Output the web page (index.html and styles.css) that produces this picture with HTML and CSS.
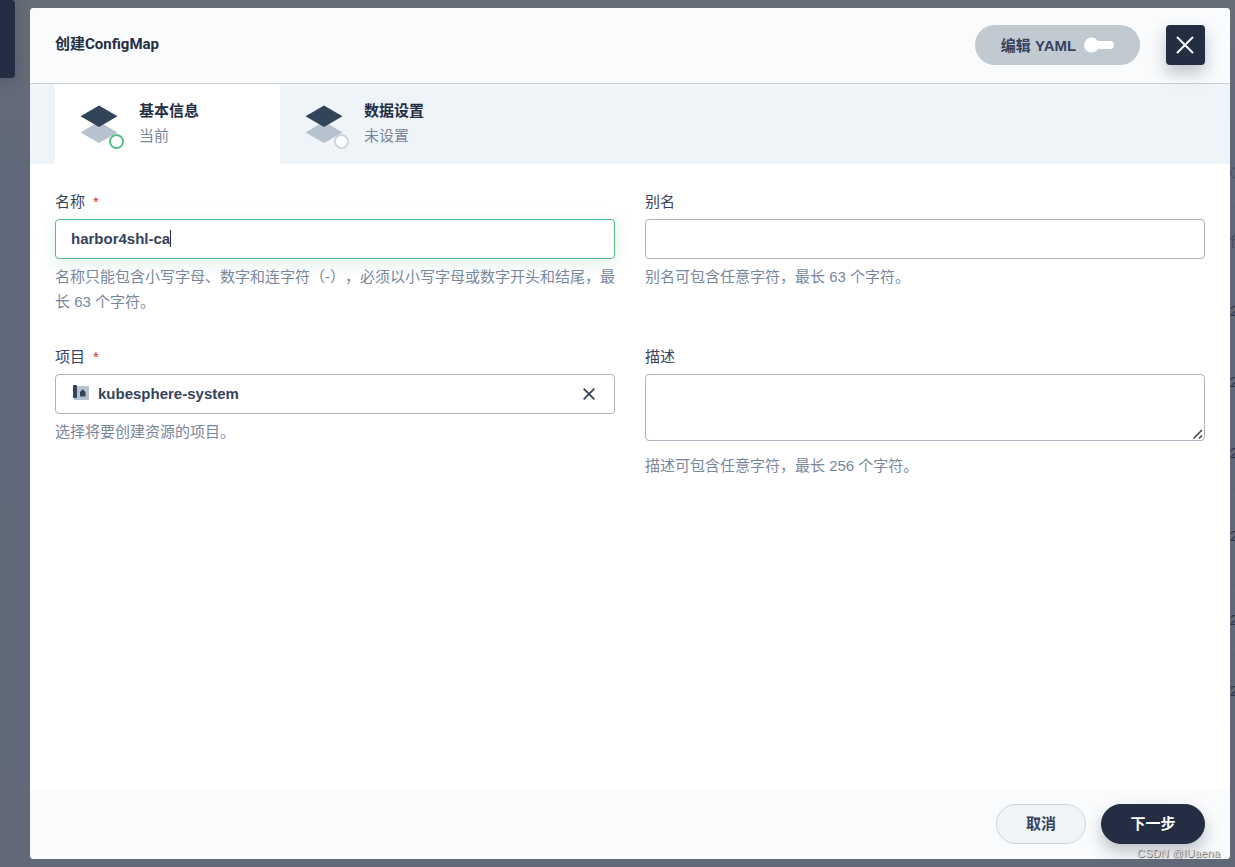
FILE: index.html
```
<!DOCTYPE html>
<html lang="zh-CN">

<head>
    <meta charset="UTF-8">
    <meta name="viewport" content="width=device-width, initial-scale=1.0">
    <title>创建ConfigMap</title>
    <link rel="stylesheet" href="styles.css">
</head>

<body>

    <!-- 遮罩下的列表页 -->
    <div class="page">
        <div class="page-nav"></div>
        <div class="page-list">
            <div class="row search"><i></i></div>
            <div class="row head">创</div>
            <div class="row">2</div>
            <div class="row">2</div>
            <div class="row">2</div>
            <div class="row tall">2</div>
            <div class="row">2</div>
            <div class="row">2</div>
        </div>
    </div>

    <div class="modal">
        <div class="modal-header">
            <h3>创建ConfigMap</h3>
            <button class="btn-yaml" type="button">
                <span>编辑 YAML</span>
                <svg width="30" height="16" viewBox="0 0 30 16"><rect x="6" y="4" width="24" height="8" rx="4" fill="#fff"/><circle cx="7.5" cy="8" r="7.5" fill="#fff"/></svg>
            </button>
            <button class="btn-close" type="button">
                <svg width="20" height="20" viewBox="0 0 20 20"><path d="M2 2L18 18M18 2L2 18" stroke="#fff" stroke-width="2"/></svg>
            </button>
        </div>

        <div class="tabs">
            <div class="tab active">
                <div class="tab-icon">
                    <svg width="40" height="40" viewBox="0 0 40 40"><path d="M20 17.5L38.5 28.5L20 39L1.5 28.5Z" fill="#b6c2cd"/><path d="M20 1.5L38.5 12.2L20 23L1.5 12.2Z" fill="#324558"/></svg>
                    <span class="dot"></span>
                </div>
                <div>
                    <div class="tab-title">基本信息</div>
                    <div class="tab-desc">当前</div>
                </div>
            </div>
            <div class="tab">
                <div class="tab-icon">
                    <svg width="40" height="40" viewBox="0 0 40 40"><path d="M20 17.5L38.5 28.5L20 39L1.5 28.5Z" fill="#b6c2cd"/><path d="M20 1.5L38.5 12.2L20 23L1.5 12.2Z" fill="#324558"/></svg>
                    <span class="dot"></span>
                </div>
                <div>
                    <div class="tab-title">数据设置</div>
                    <div class="tab-desc">未设置</div>
                </div>
            </div>
        </div>

        <div class="form">
            <div class="form-item">
                <label>名称<span class="required">*</span></label>
                <div class="input focus">harbor4shl-ca<span class="caret"></span></div>
                <p>名称只能包含小写字母、数字和连字符（-），必须以小写字母或数字开头和结尾，最长 63 个字符。</p>
            </div>
            <div class="form-item">
                <label>别名</label>
                <div class="input"></div>
                <p>别名可包含任意字符，最长 63 个字符。</p>
            </div>
            <div class="form-item">
                <label>项目<span class="required">*</span></label>
                <div class="input select">
                    <svg width="16" height="16" viewBox="0 0 16 16"><rect x="1" y="2" width="15" height="14" fill="#b6c2cd"/><rect x="0" y="1" width="4" height="13" rx="1" fill="#324558"/><path d="M7 12.5V8L9.7 5.2L12.5 8V12.5Z" fill="#324558"/></svg>
                    <span>kubesphere-system</span>
                    <svg class="clear" width="12" height="12" viewBox="0 0 12 12"><path d="M.7 .7L11.3 11.3M11.3 .7L.7 11.3" stroke="#324558" stroke-width="1.8"/></svg>
                </div>
                <p>选择将要创建资源的项目。</p>
            </div>
            <div class="form-item">
                <label>描述</label>
                <div class="input textarea">
                    <svg width="10" height="10" viewBox="0 0 10 10"><path d="M.5 9.5L9 1M6 9.5L9 6.5" stroke="#444" stroke-width="1.5"/></svg>
                </div>
                <p>描述可包含任意字符，最长 256 个字符。</p>
            </div>
        </div>

        <div class="modal-footer">
            <button class="btn" type="button">取消</button>
            <button class="btn btn-primary" type="button">下一步</button>
        </div>
    </div>

    <div class="watermark">CSDN @IUaena</div>

</body>

</html>
```
FILE: styles.css
```
* {
    box-sizing: border-box;
}

body {
    margin: 0;
    height: 867px;
    overflow: hidden;
    position: relative;
    color: #36435c;
    font: 15px/25px "Liberation Sans", "Noto Sans CJK SC", sans-serif;
    text-spacing-trim: space-all;
    background: #626a79;
}

h3, p {
    margin: 0;
}

svg {
    display: block;
    flex: none;
}

button {
    padding: 0;
    border: 0;
    color: inherit;
    font: inherit;
    font-weight: bold;
}

/* 背景页面 */
.page {
    height: 867px;
    display: flex;
    justify-content: space-between;
    background: linear-gradient(#676c78, #606979 170px, #616979);
}

.page-nav {
    width: 15px;
    height: 78px;
    border-radius: 0 4px 4px 0;
    background: #242e42;
    box-shadow: 0 4px 16px rgba(36, 46, 66, .3);
}

.page-list {
    width: 5px;
    padding-top: 140px;
    overflow: hidden;
    color: #2b3347;
}

.row {
    height: 71px;
    padding-bottom: 2px;
    display: flex;
    align-items: center;
    border-bottom: 1px solid #5c6474;
}

.row.search, .row.head {
    height: 68px;
    color: #3f4a63;
}

.row.search i {
    width: 12px;
    height: 12px;
    flex: none;
    border: 2px solid #4f596d;
    border-radius: 50%;
}

.row.tall {
    height: 96px;
}

/* 弹窗 */
.modal {
    position: absolute;
    top: 8px;
    left: 30px;
    width: 1200px;
    height: 851px;
    display: flex;
    flex-direction: column;
    overflow: hidden;
    border-radius: 4px;
    background: #fff;
}

.modal-header {
    height: 76px;
    padding: 0 25px;
    display: flex;
    align-items: center;
    flex: none;
    border-bottom: 1px solid #c7cfd7;
    background: #f9fbfd;
}

.modal-header h3 {
    margin-right: auto;
    padding-bottom: 4px;
    color: #242e42;
    font: bold 15px/20px Roboto, "Noto Sans CJK SC", sans-serif;
}

.btn-yaml {
    width: 165px;
    height: 40px;
    margin: 0 26px 2px 0;
    display: flex;
    align-items: center;
    justify-content: center;
    gap: 8px;
    border-radius: 20px;
    background: #c1c9d1;
}

.btn-yaml span {
    padding-top: 1px;
}

.btn-close {
    width: 39px;
    height: 40px;
    margin-bottom: 2px;
    padding-right: 1px;
    display: flex;
    align-items: center;
    justify-content: center;
    position: relative;
    border-radius: 4px;
    background: #242e42;
    box-shadow: 0 8px 16px rgba(36, 46, 66, .28);
}

.tabs {
    height: 80px;
    padding-left: 25px;
    display: flex;
    flex: none;
    background: #eff4f9;
}

.tab {
    width: 225px;
    padding: 14px 24px;
    display: flex;
    gap: 20px;
}

.tab.active {
    background: #fff;
}

.tab-icon {
    height: 40px;
    margin-top: 6px;
    position: relative;
}

.dot {
    position: absolute;
    right: -5px;
    bottom: -5px;
    width: 15px;
    height: 15px;
    border: 2px solid #ccd3db;
    border-radius: 50%;
    background: #fff;
}

.active .dot {
    border-color: #55bc8a;
}

.tab-title {
    color: #242e42;
    font-weight: bold;
}

.tab-desc {
    color: #79879c;
}

/* 表单 */
.form {
    flex: 1;
    padding: 25px;
    display: grid;
    grid-template-columns: 560px 560px;
    gap: 30px;
    align-content: start;
}

.form-item label {
    display: block;
}

.form-item p {
    margin-top: 5px;
    color: #79879c;
}

.required {
    margin-left: 8px;
    color: #d9302b;
}

.input {
    height: 40px;
    margin-top: 5px;
    padding: 0 15px 2px;
    display: flex;
    align-items: center;
    border: 1px solid #abb4be;
    border-radius: 4px;
    font-weight: bold;
}

.input.focus {
    border-color: #55bc8a;
    box-shadow: 0 4px 16px rgba(85, 188, 138, .22);
}

.caret {
    width: 1px;
    height: 17px;
    background: #242e42;
}

.select {
    padding-left: 17px;
    gap: 9px;
}

.select svg {
    margin-bottom: 2px;
}

.select .clear {
    margin: 2px 4px 0 auto;
}

.textarea {
    height: 67px;
    padding: 0 1px 1px 0;
    align-items: flex-end;
    justify-content: flex-end;
}

.textarea + p {
    margin-top: 12px;
}

.modal-footer {
    height: 69px;
    padding: 0 25px 2px;
    display: flex;
    align-items: center;
    justify-content: flex-end;
    gap: 15px;
    flex: none;
    background: #f9fbfd;
}

.btn {
    width: 90px;
    height: 40px;
    border: 1px solid #ccd3db;
    border-radius: 20px;
    background: #eff4f9;
}

.btn-primary {
    width: 104px;
    color: #fff;
    border-color: #242e42;
    background: #242e42;
    box-shadow: 0 8px 16px rgba(36, 46, 66, .28);
}

.watermark {
    position: absolute;
    right: 15px;
    bottom: 7px;
    color: #ddd;
    font: 11px/14px "Liberation Sans", sans-serif;
    letter-spacing: .2px;
    text-shadow: 1px 1px 1px #555;
}
```
